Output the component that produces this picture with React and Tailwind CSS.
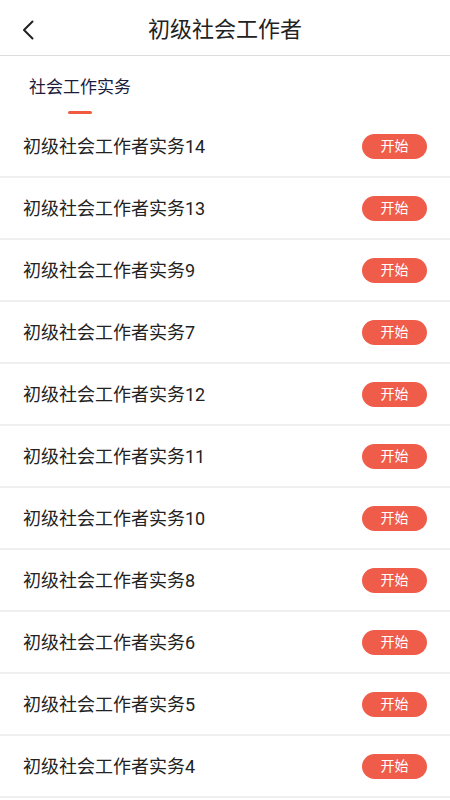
import React from "react";

const items = ["14", "13", "9", "7", "12", "11", "10", "8", "6", "5", "4"];

export default function App() {
  return (
    <div
      className="w-[450px] h-[800px] overflow-hidden bg-white"
      style={{ fontFamily: 'Roboto, "Noto Sans CJK SC", sans-serif' }}
    >
      {/* header */}
      <div className="relative h-[56px] flex items-center justify-center border-b border-[#dcdcdc]">
        <button className="absolute left-[20px] top-[18px] w-[16px] h-[24px] flex items-center justify-center">
          <svg width="12" height="20" viewBox="0 0 12 20" fill="none">
            <path d="M10.5 1.5L2 10l8.5 8.5" stroke="#222" strokeWidth="2" strokeLinecap="round" strokeLinejoin="round" />
          </svg>
        </button>
        <h1 className="text-[22px] text-[#222] leading-none mt-[4px]">初级社会工作者</h1>
      </div>

      {/* tab */}
      <div className="h-[60px] pl-[29px] pt-[20px] flex flex-col items-start">
        <div className="flex flex-col items-center">
          <span className="text-[17px] leading-[22px] text-[#1c1c3c]">社会工作实务</span>
          <span className="mt-[13px] w-[24px] h-[3px] rounded-full bg-[#f05a40]" />
        </div>
      </div>

      {/* list */}
      <ul>
        {items.map((n) => (
          <li
            key={n}
            className="flex items-center justify-between h-[62px] pl-[23px] pr-[23px] border-b-2 border-[#efefef]"
          >
            <span className="text-[18px] text-[#222]">初级社会工作者实务{n}</span>
            <button className="w-[65px] h-[25px] rounded-full bg-[#f05c4a] text-white text-[14px] leading-none flex items-center justify-center">
              开始
            </button>
          </li>
        ))}
      </ul>
    </div>
  );
}
